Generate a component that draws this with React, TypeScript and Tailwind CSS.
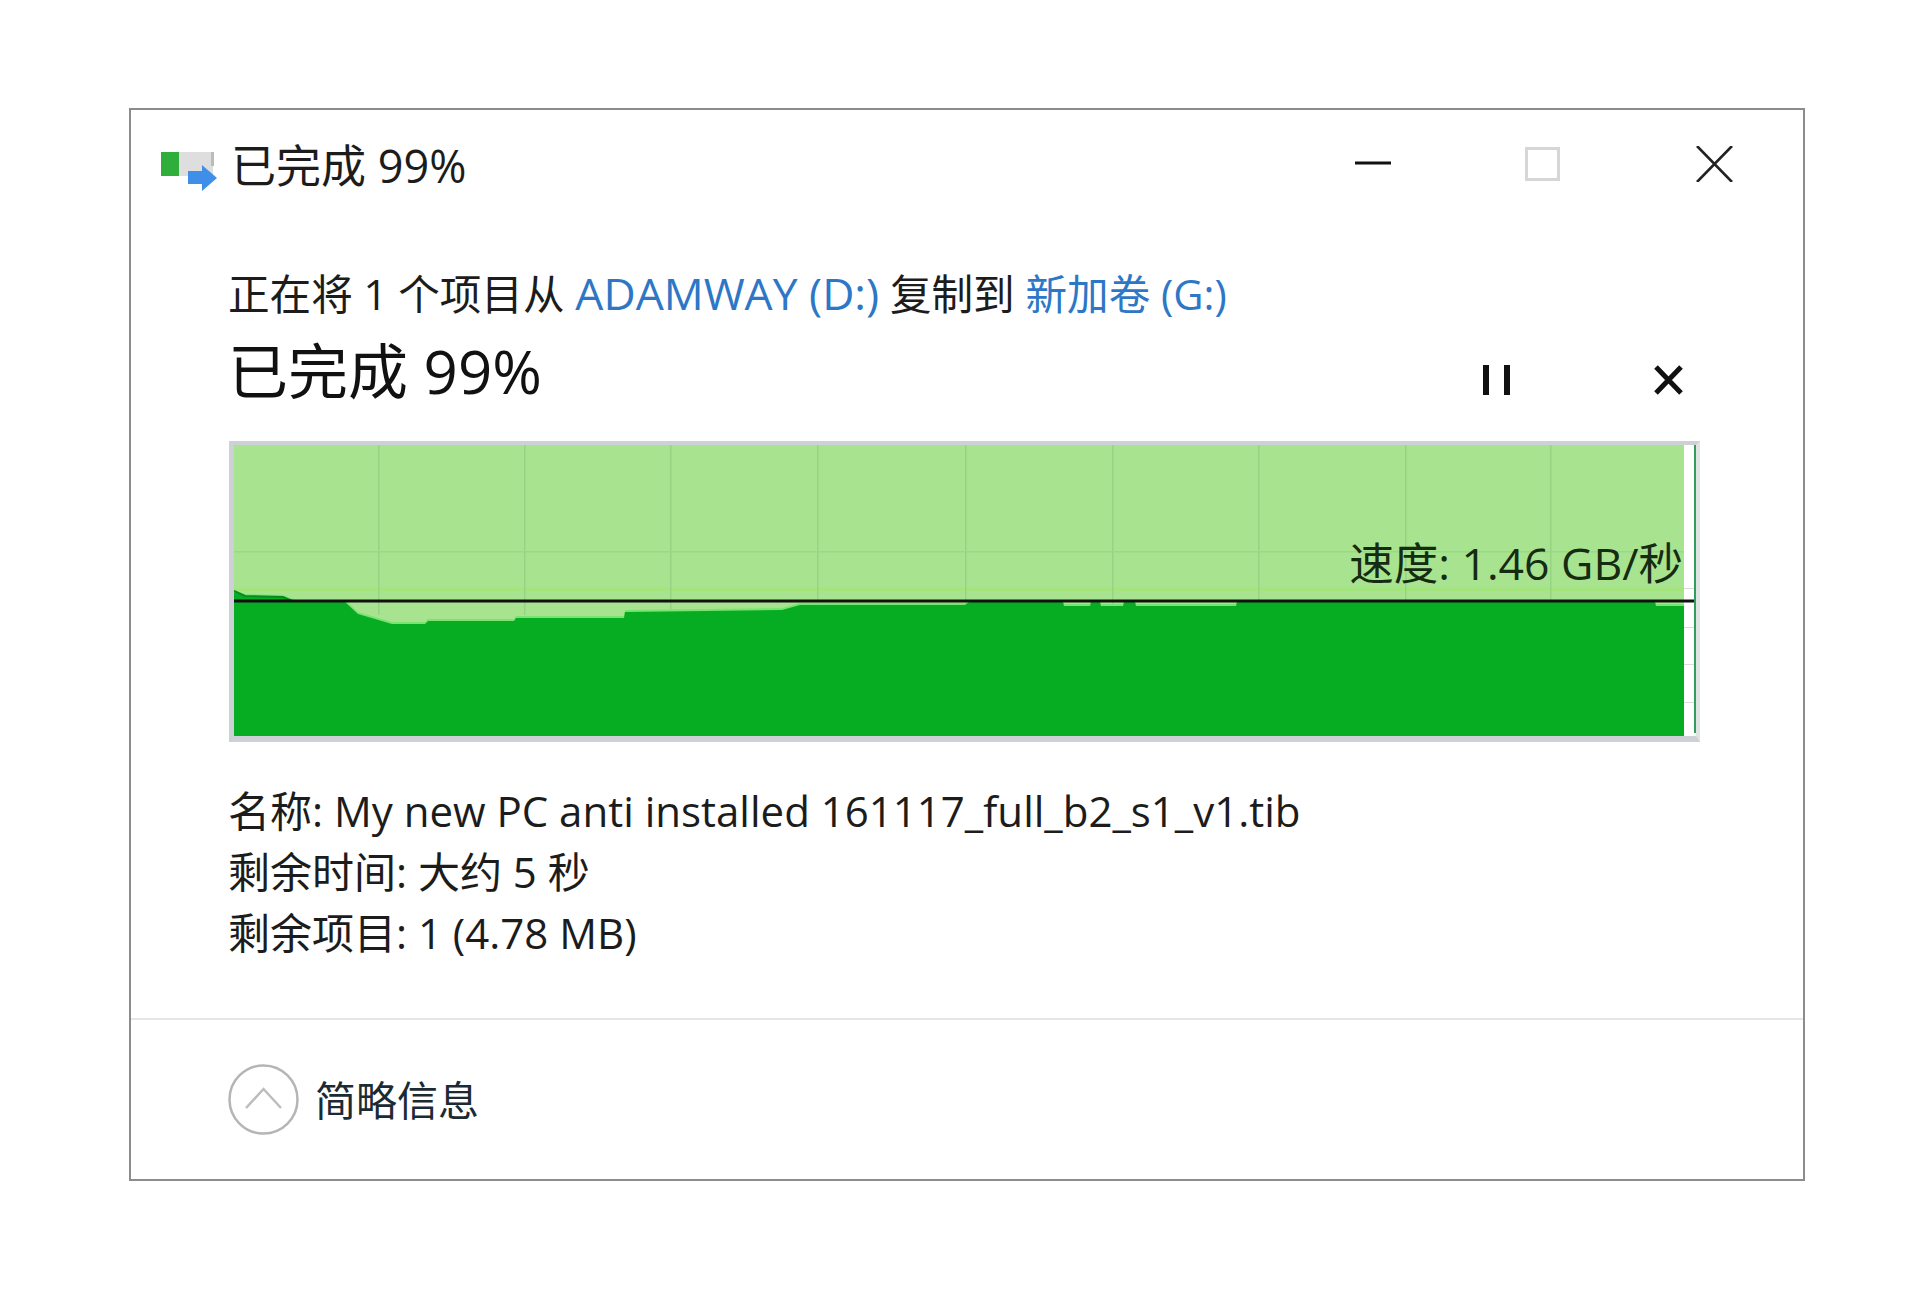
const font = { fontFamily: '"Open Sans", "Noto Sans CJK SC", sans-serif' };

const top =
  "L11 151 L49 152 L62 157 L111 157 L124 169 L141 174 L158 179 L191 179 L194 176 L280 176 L282 173 L390 173 L391 167 L548 165 L566 160 L731 160 L735 157 L829 157 L830 161 L856 161 L857 157 L866 157 L867 161 L889 161 L890 157 L901 157 L902 161 L1002 161 L1003 157 L1421 157 L1422 161 L1450 161";

function Chart() {
  const grid = [144, 290, 436, 583, 731, 878, 1024, 1171, 1316];
  return (
    <div className="relative ml-[1px] mt-[37px] h-[301px] w-[1471px] border-[4px] border-b-[6px] border-l-[5px] border-[#cdd0d4] border-r-[#dfe3e3]">
      <svg width="1462" height="291" viewBox="0 0 1462 291" className="block">
        <rect x="0" y="0" width="1450" height="291" fill="#a8e48f" />
        <rect x="0" y="143" width="1450" height="3" fill="#a3e47c" />
        {grid.map((x) => (
          <rect key={x} x={x} y="0" width="1.5" height="170" fill="#96d484" />
        ))}
        <rect x="0" y="106" width="1450" height="1.5" fill="#9ad888" />
        <path d={`M0 147 ${top} L1450 291 L0 291 Z`} fill="#79e46f" transform="translate(0 -2)" />
        <path d={`M0 147 ${top} L1450 291 L0 291 Z`} fill="#06ad23" />
        <path d="M0 146 L11 151 L49 152 L58 156" fill="none" stroke="#078a20" strokeWidth="2" />
        <rect x="0" y="154.5" width="1462" height="3" fill="#111" />
        <rect x="1460" y="0" width="2" height="288" fill="#2f9e5c" />
        {[143, 182, 219, 257].map((y) => (
          <rect key={y} x="1450" y={y} width="10" height="1" fill="#dcdcdc" />
        ))}
      </svg>
      <span className="absolute right-[13px] top-[95px] text-[44.5px] leading-[46px] text-[#152b12]">速度: 1.46 GB/秒</span>
    </div>
  );
}

export default function App() {
  return (
    <div className="h-[1289px] w-[1920px] bg-white pl-[129px] pt-[108px] text-[#1c1c1c]" style={font}>
      <div className="flex h-[1073px] w-[1676px] flex-col border-2 border-[#8c8c8c]">
        <div className="flex h-[86px] items-end pl-[30px] pr-[70px]">
          <div className="flex h-[60px] items-center gap-[13px]">
            <svg className="mt-[11px]" width="57" height="40" viewBox="0 0 57 40">
              <rect x="0" y="0" width="18" height="24" fill="#2fae3c" />
              <rect x="18" y="0" width="34" height="24" fill="#dedede" />
              <rect x="50" y="0" width="3" height="14" fill="#bbbbbb" />
              <path d="M27 19 H41 V13 L56 26 L41 39 V32 H27 Z" fill="#3f8fe8" />
            </svg>
            <span className="text-[45px] leading-[60px]">已完成 99%</span>
          </div>
          <div className="ml-auto flex h-[60px] -translate-y-[2px] items-center">
            <svg width="36" height="36" viewBox="0 0 36 36">
              <path d="M0 17 H36" stroke="#111" strokeWidth="3" />
            </svg>
            <div className="ml-[134px] h-[34px] w-[35px] border-[3px] border-[#d6d6d6]" />
            <svg className="ml-[136px]" width="37" height="36" viewBox="0 0 37 36">
              <path d="M1 0 L36 36 M36 0 L1 36" stroke="#222" strokeWidth="2.6" />
            </svg>
          </div>
        </div>
        <div className="flex flex-1 flex-col pl-[97px]">
          <div className="mt-[72px] text-[41.6px] leading-[50px]">
            正在将 1 个项目从 <span className="text-[44.4px] text-[#2d77c6]">ADAMWAY (D:)</span> 复制到 <span className="text-[#2d77c6]">新加卷 (G:)</span>
          </div>
          <div className="mt-[19px] flex h-[66px] items-center pr-[120px]">
            <span className="text-[60px] leading-[66px] text-[#111]">已完成 99%</span>
            <div className="ml-auto flex translate-y-[9px] items-center">
              <div className="flex h-[30px] w-[27px] justify-between">
                <div className="w-[6px] bg-[#111]" />
                <div className="w-[6px] bg-[#111]" />
              </div>
              <svg className="ml-[144px]" width="29" height="30" viewBox="0 0 29 30">
                <path d="M2 2 L27 28 M27 2 L2 28" stroke="#111" strokeWidth="5" />
              </svg>
            </div>
          </div>
          <Chart />
          <div className="mt-[38px] text-[42px] leading-[61px]">
            <div>名称: My new PC anti installed 161117_full_b2_s1_v1.tib</div>
            <div>剩余时间: 大约 5 秒</div>
            <div>剩余项目: 1 (4.78 MB)</div>
          </div>
        </div>
        <div className="mt-auto flex h-[161px] items-start border-t-2 border-[#e6e6e6] pl-[97px] pt-[44px]">
          <div className="flex items-center gap-[16px]">
            <svg width="71" height="71" viewBox="0 0 71 71">
              <circle cx="35.5" cy="35.5" r="34" fill="none" stroke="#b5b5b5" strokeWidth="2.5" />
              <path d="M18 44 L35.5 25 L53 44" fill="none" stroke="#bdbdbd" strokeWidth="2.5" />
            </svg>
            <span className="text-[41px] leading-[60px] text-[#1c2a33]">简略信息</span>
          </div>
        </div>
      </div>
    </div>
  );
}
